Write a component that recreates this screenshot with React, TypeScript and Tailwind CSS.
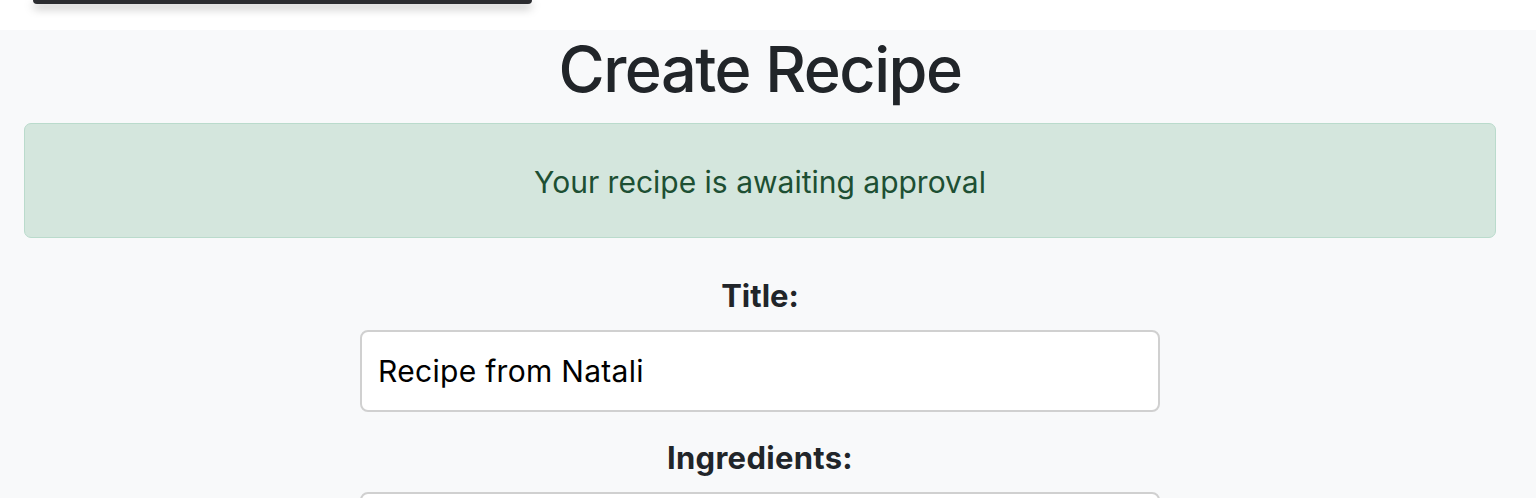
import React, { useState } from "react";

const App: React.FC = () => {
  const [title, setTitle] = useState("Recipe from Natali");
  const [ingredients, setIngredients] = useState("");

  return (
    <div className="min-h-screen bg-[#f8f9fa] font-['Inter','Liberation_Sans',sans-serif] text-[#212529]">
      <div className="h-[30px] bg-white">
        <div className="ml-[33px] h-[4px] w-[499px] rounded-b-[12px] bg-[#2b2c30] shadow-[0_4px_10px_rgba(0,0,0,0.35)]"></div>
      </div>
      <div className="w-[1520px] pb-10">
        <h1 className="text-center text-[63px] font-medium leading-[79px] tracking-[-1.5px]">
          Create Recipe
        </h1>
        <div className="mx-[24px] mt-[14px] flex h-[115px] items-center justify-center rounded-[7px] border border-[#badbcc] bg-[#d4e6dd] pt-[3px] text-[30px] text-[#1d4f33]">
          Your recipe is awaiting approval
        </div>
        <form className="mt-[40px] flex flex-col items-center">
          <label
            htmlFor="title"
            className="mb-4 text-[31px] font-bold leading-9"
          >
            Title:
          </label>
          <input
            id="title"
            type="text"
            value={title}
            onChange={(e) => setTitle(e.target.value)}
            className="h-[82px] w-[800px] rounded-lg border-2 border-[#d0d0d0] bg-white px-4 text-[30px] tracking-[0.3px] text-black outline-none"
          />
          <label
            htmlFor="ingredients"
            className="mb-4 mt-[28px] text-[31px] font-bold leading-9 tracking-[0.3px]"
          >
            Ingredients:
          </label>
          <textarea
            id="ingredients"
            value={ingredients}
            onChange={(e) => setIngredients(e.target.value)}
            className="h-[160px] w-[800px] rounded-lg border-2 border-[#d0d0d0] bg-white px-4 py-3 text-[30px] text-black outline-none"
          />
        </form>
      </div>
    </div>
  );
};

export default App;
